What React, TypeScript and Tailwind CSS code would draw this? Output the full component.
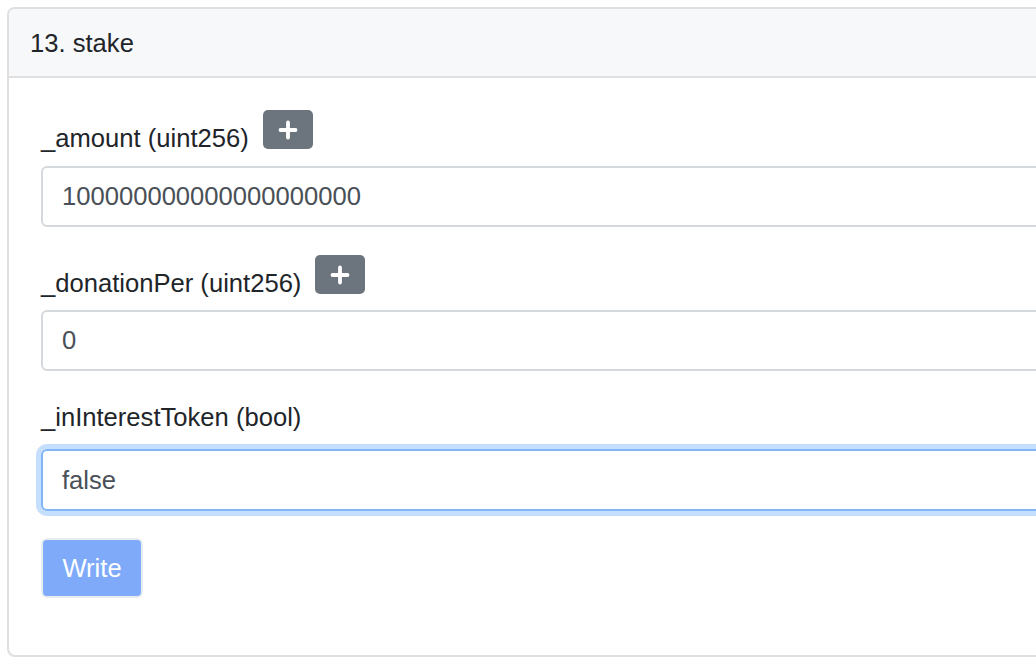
import React from 'react';

const PlusButton: React.FC = () => (
  <button className="ml-[14px] mb-[8px] flex h-[39px] w-[50px] items-center justify-center rounded-[5px] bg-[#6c757d]">
    <svg width="20" height="20" viewBox="0 0 20 20" fill="none">
      <path d="M10 2.5v15M2.5 10h15" stroke="#ffffff" strokeWidth="3.8" strokeLinecap="round" />
    </svg>
  </button>
);

const App: React.FC = () => {
  return (
    <div
      className="h-[668px] w-[1036px] overflow-hidden bg-white text-[25.6px] text-[#212529]"
      style={{ fontFamily: '"Liberation Sans", Arial, Helvetica, sans-serif' }}
    >
      <div className="ml-[7px] mt-[7px] w-[1100px] rounded-[8px] border-2 border-[#dfdfdf]">
        {/* Header */}
        <div className="flex h-[69px] items-center rounded-t-[6px] border-b-2 border-[#dfdfdf] bg-[#f7f8f9] px-[21px]">
          <span className="leading-[38px]">13. stake</span>
        </div>

        {/* Body */}
        <div className="px-[32px] pb-[57px] pt-[32px]">
          <div className="mb-[9px] flex items-end">
            <span className="leading-[38px]">_amount (uint256)</span>
            <PlusButton />
          </div>
          <div className="mb-[28px] flex h-[61px] items-center rounded-[6px] border-2 border-[#d5d9dd] px-[19px] text-[#495057]">
            100000000000000000000
          </div>

          <div className="mb-[8px] flex items-end">
            <span className="leading-[38px]">_donationPer (uint256)</span>
            <PlusButton />
          </div>
          <div className="mb-[27px] flex h-[61px] items-center rounded-[6px] border-2 border-[#d5d9dd] px-[19px] text-[#495057]">
            0
          </div>

          <div className="mb-[13px] leading-[38px]">_inInterestToken (bool)</div>
          <div className="mb-[27px] flex h-[62px] items-center rounded-[6px] border-2 border-[#80b3f7] px-[19px] text-[#495057] shadow-[0_0_0_5px_rgba(0,110,255,0.22)]">
            false
          </div>

          <button className="flex h-[60px] w-[102px] items-center justify-center rounded-[6px] border-2 border-[#e9ecf1] bg-[#7eaaf9] text-white">
            Write
          </button>
        </div>
      </div>
    </div>
  );
};

export default App;
